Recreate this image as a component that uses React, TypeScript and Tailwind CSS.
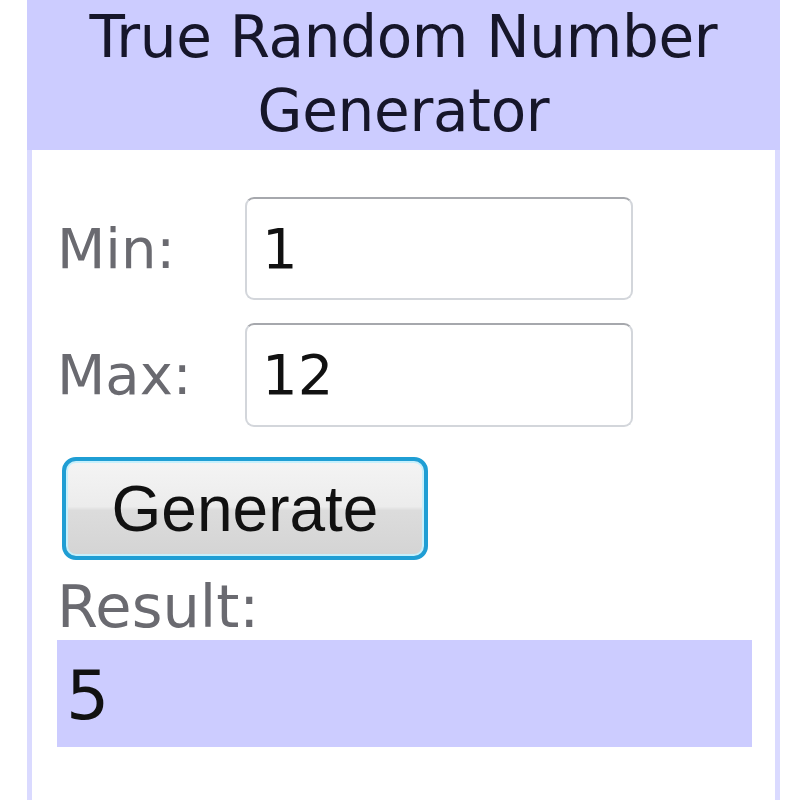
export default function App() {
  return (
    <div className="min-h-[800px] bg-white" style={{ fontFamily: '"DejaVu Sans", Verdana, sans-serif' }}>
      <div className="ml-[27px] flex min-h-[800px] w-[753px] flex-col border-x-[5px] border-[#dadaff]">
        <div className="-mx-[5px] h-[150px] bg-[#ccccff] text-center text-[58px] leading-[74px] tracking-[-0.3px] text-[#16162a]">
          True Random Number
          <br />
          Generator
        </div>
        <div className="flex flex-1 flex-col bg-white pl-[25px] pt-[47px]">
          <div className="flex items-center">
            <span className="w-[188px] text-[56px] leading-none text-[#6a6a70]">Min:</span>
            <div className="flex h-[103px] w-[388px] items-center rounded-[9px] border-2 border-[#d3d6db] border-t-[#a6a8ad] bg-white pl-[15px] text-[56px] text-[#111]">
              1
            </div>
          </div>
          <div className="mt-[23px] flex items-center">
            <span className="w-[188px] text-[56px] leading-none text-[#6a6a70]">Max:</span>
            <div className="flex h-[104px] w-[388px] items-center rounded-[9px] border-2 border-[#d3d6db] border-t-[#a6a8ad] bg-white pl-[15px] text-[56px] text-[#111]">
              12
            </div>
          </div>
          <button
            type="button"
            className="ml-[5px] mt-[30px] h-[103px] w-[366px] rounded-[14px] border-[4px] border-[#1f9ed4] bg-[linear-gradient(to_bottom,#f4f4f4_0%,#ececec_48%,#dcdcdc_52%,#d4d4d4_100%)] text-[64px] leading-none text-[#111] shadow-[inset_0_0_0_2px_#c6f0fc]"
            style={{ fontFamily: '"Liberation Sans", Arial, sans-serif' }}
          >
            Generate
          </button>
          <div className="mt-[18px] text-[59px] leading-[57px] text-[#6a6a70]">Result:</div>
          <div className="mt-[5px] h-[107px] w-[695px] bg-[#ccccff] pl-[9px] pt-[22px] text-[68px] leading-[68px] text-[#111]">
            5
          </div>
        </div>
      </div>
    </div>
  );
}
